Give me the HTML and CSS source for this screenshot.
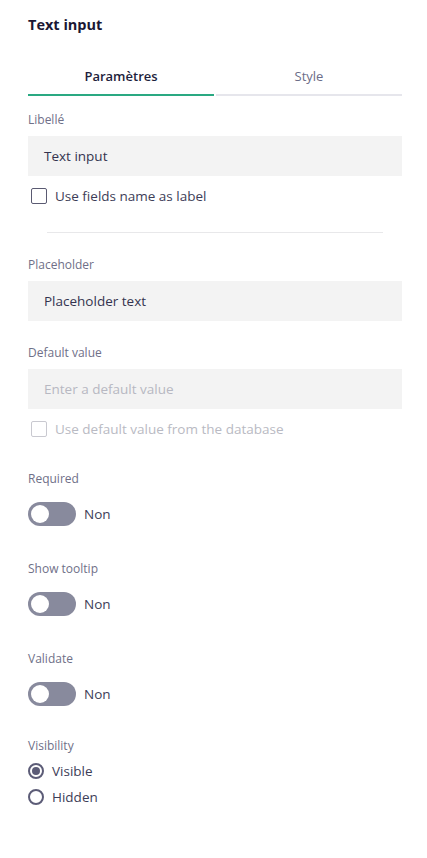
FILE: index.html
```html
<!DOCTYPE html>
<html lang="fr">
<head>
<meta charset="utf-8">
<title>Text input</title>
<link rel="stylesheet" href="styles.css">
</head>
<body>
<div class="panel">
  <h1 class="title">Text input</h1>
  <div class="tabs">
    <div class="tab active">Paramètres</div>
    <div class="tab">Style</div>
  </div>

  <div class="field first">
    <div class="label">Libellé</div>
    <div class="input">Text input</div>
    <label class="check"><span class="box"></span>Use fields name as label</label>
  </div>

  <div class="divider"></div>

  <div class="field">
    <div class="label">Placeholder</div>
    <div class="input">Placeholder text</div>
  </div>

  <div class="field">
    <div class="label">Default value</div>
    <div class="input placeholder">Enter a default value</div>
    <label class="check disabled"><span class="box"></span>Use default value from the database</label>
  </div>

  <div class="field toggle-field">
    <div class="label">Required</div>
    <div class="toggle-row"><span class="switch"><span class="knob"></span></span>Non</div>
  </div>

  <div class="field toggle-field">
    <div class="label">Show tooltip</div>
    <div class="toggle-row"><span class="switch"><span class="knob"></span></span>Non</div>
  </div>

  <div class="field toggle-field">
    <div class="label">Validate</div>
    <div class="toggle-row"><span class="switch"><span class="knob"></span></span>Non</div>
  </div>

  <div class="field radios">
    <div class="label">Visibility</div>
    <div class="radio-row"><span class="radio checked"></span>Visible</div>
    <div class="radio-row"><span class="radio"></span>Hidden</div>
  </div>
</div>
</body>
</html>
```

FILE: styles.css
```css
* { box-sizing: border-box; }
html, body { margin: 0; padding: 0; background: #fff; }
body {
  font-family: "Open Sans", "Noto Sans", sans-serif;
  color: #3d3d57;
  width: 427px;
}
.panel {
  padding: 15px 25px 40px 28px;
  display: flex;
  flex-direction: column;
}
.title {
  margin: 0;
  font-size: 14.5px;
  font-weight: 700;
  line-height: 20px;
  color: #1b1733;
}
.tabs {
  display: flex;
  gap: 2px;
  margin-top: 32px;
}
.tab {
  flex: 1;
  text-align: center;
  font-size: 13px;
  line-height: 18px;
  padding-bottom: 9px;
  color: #6b6d88;
  border-bottom: 2px solid #e6e6ec;
}
.tab.active {
  color: #1e1e3c;
  font-weight: 600;
  border-bottom-color: #2aa982;
}
.field { display: flex; flex-direction: column; }
.field.first { margin-top: 16px; }
.label {
  font-size: 12px;
  line-height: 16px;
  color: #6f7088;
  margin-bottom: 8px;
}
.input {
  height: 40px;
  background: #f3f3f3;
  padding: 0 16px;
  display: flex;
  align-items: center;
  font-size: 13.5px;
  color: #33334f;
}
.input.placeholder { color: #b7b8c2; }
.check {
  display: flex;
  align-items: center;
  gap: 8px;
  margin-top: 11px;
  padding-left: 3px;
  font-size: 13.5px;
  line-height: 18px;
  color: #3d3d57;
}
.check .box {
  width: 16px;
  height: 16px;
  border: 1px solid #5a5a72;
  border-radius: 2px;
  background: #fff;
}
.check.disabled { color: #b9bac3; }
.check.disabled .box { border-color: #c9c9d0; }
.divider {
  height: 1px;
  background: #e8e8ea;
  margin: 27px 19px 24px 19px;
}
.field + .field { margin-top: 24px; }
.toggle-field { margin-top: 33px !important; }
.toggle-field .label { margin-bottom: 15px; }
.toggle-field + .toggle-field { margin-top: 35px !important; }
.toggle-row {
  display: flex;
  align-items: center;
  gap: 8px;
  font-size: 13.5px;
  color: #3d3d57;
}
.switch {
  width: 48px;
  height: 24px;
  border-radius: 12px;
  background: #888a9d;
  display: flex;
  align-items: center;
  padding: 0 3px;
}
.knob {
  width: 18px;
  height: 18px;
  border-radius: 50%;
  background: #fff;
}
.radios { margin-top: 32px !important; }
.radios .label { margin-bottom: 4px; }
.radio-row {
  display: flex;
  align-items: center;
  gap: 8px;
  font-size: 13.5px;
  line-height: 20px;
  height: 26px;
  color: #3d3d57;
}
.radio {
  width: 16px;
  height: 16px;
  border: 2px solid #5c5c77;
  border-radius: 50%;
  display: flex;
  align-items: center;
  justify-content: center;
}
.radio.checked::after {
  content: "";
  width: 8px;
  height: 8px;
  border-radius: 50%;
  background: #5c5c77;
}
```
